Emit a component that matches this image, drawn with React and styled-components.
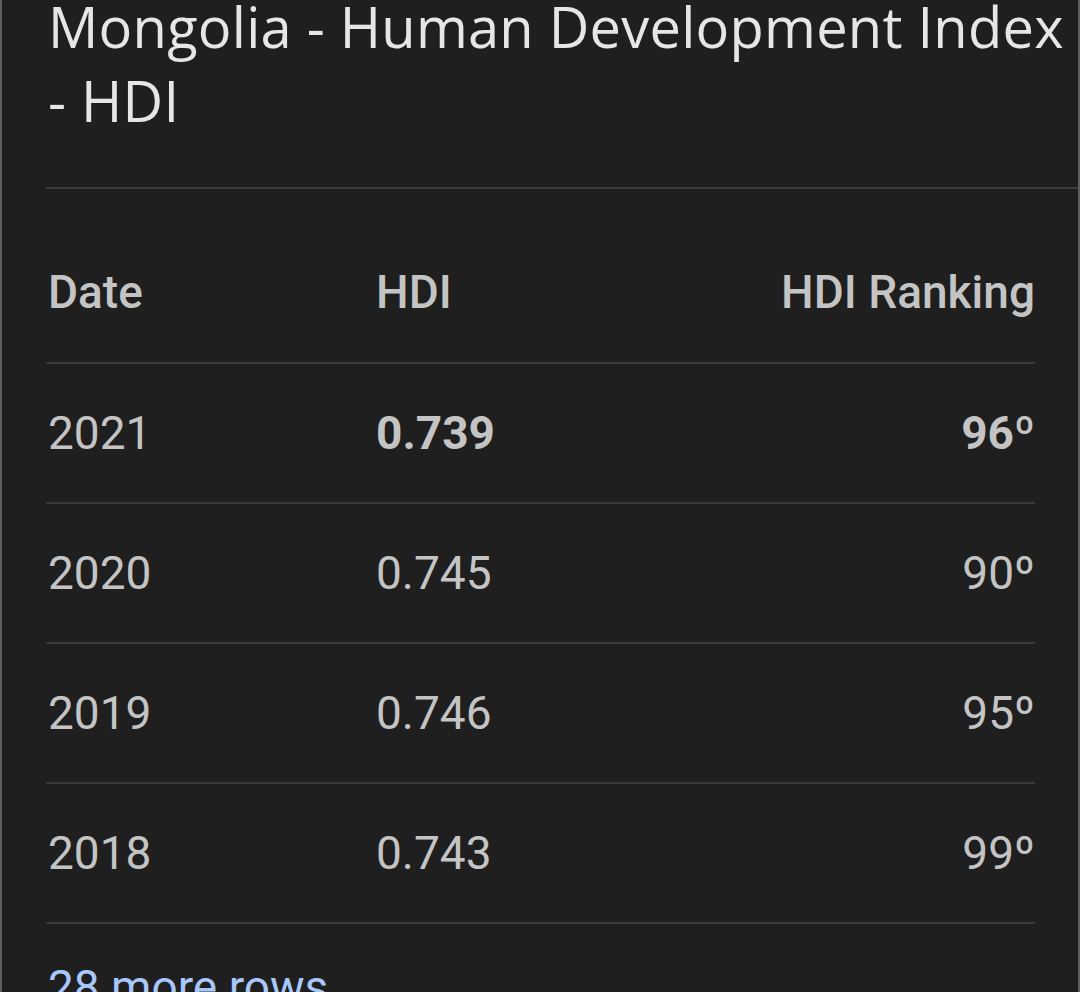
import React from "react";
import styled, { createGlobalStyle } from "styled-components";

const GlobalStyle = createGlobalStyle`
  html, body {
    margin: 0;
    padding: 0;
    background-color: #1f1f1f;
    height: 100%;
    overflow: hidden;
  }
  #root {
    height: 100%;
  }
`;

const Card = styled.div`
  display: flow-root;
  box-sizing: border-box;
  width: 1080px;
  height: 100%;
  background-color: #1f1f1f;
  border-left: 2px solid #5e5e5e;
  border-right: 2px solid #5e5e5e;
  padding-left: 44px;
  font-family: Roboto, "Liberation Sans", sans-serif;
`;

const Title = styled.h1`
  margin: -11px 0 0 2px;
  padding-right: 2px;
  font-family: "Open Sans", "Liberation Sans", sans-serif;
  font-weight: 500;
  font-size: 56px;
  line-height: 74px;
  color: #e6e6e6;
  letter-spacing: 0.25px;
`;

const Divider = styled.div`
  margin-top: 50px;
  height: 2px;
  background-color: #3b3e41;
`;

const Table = styled.div`
  margin-right: 43px;
`;

const Row = styled.div`
  display: grid;
  grid-template-columns: 328px 1fr auto;
  align-items: center;
  padding: ${(p) => (p.$head ? "75px 0 42px 2px" : "41px 0 41px 2px")};
  border-bottom: 2px solid #3a3a3a;
  font-size: 46px;
  line-height: 56px;
  color: #c4c4c4;
  font-weight: ${(p) => (p.$head ? 500 : 400)};
`;

const Cell = styled.span`
  font-weight: ${(p) => (p.$bold ? 700 : "inherit")};
  text-align: ${(p) => (p.$right ? "right" : "left")};
`;

const MoreLink = styled.a`
  display: block;
  padding: 35px 0 0 2px;
  font-size: 46px;
  line-height: 56px;
  color: #a8c7fa;
  text-decoration: none;
`;

const rows = [
  { date: "2021", hdi: "0.739", rank: "96º", latest: true },
  { date: "2020", hdi: "0.745", rank: "90º" },
  { date: "2019", hdi: "0.746", rank: "95º" },
  { date: "2018", hdi: "0.743", rank: "99º" },
];

export default function App() {
  return (
    <>
      <GlobalStyle />
      <Card>
        <Title>Mongolia - Human Development Index - HDI</Title>
        <Divider />
        <Table>
          <Row $head>
            <Cell>Date</Cell>
            <Cell>HDI</Cell>
            <Cell $right>HDI Ranking</Cell>
          </Row>
          {rows.map((r) => (
            <Row key={r.date}>
              <Cell>{r.date}</Cell>
              <Cell $bold={r.latest}>{r.hdi}</Cell>
              <Cell $right $bold={r.latest}>
                {r.rank}
              </Cell>
            </Row>
          ))}
        </Table>
        <MoreLink href="#">28 more rows</MoreLink>
      </Card>
    </>
  );
}
